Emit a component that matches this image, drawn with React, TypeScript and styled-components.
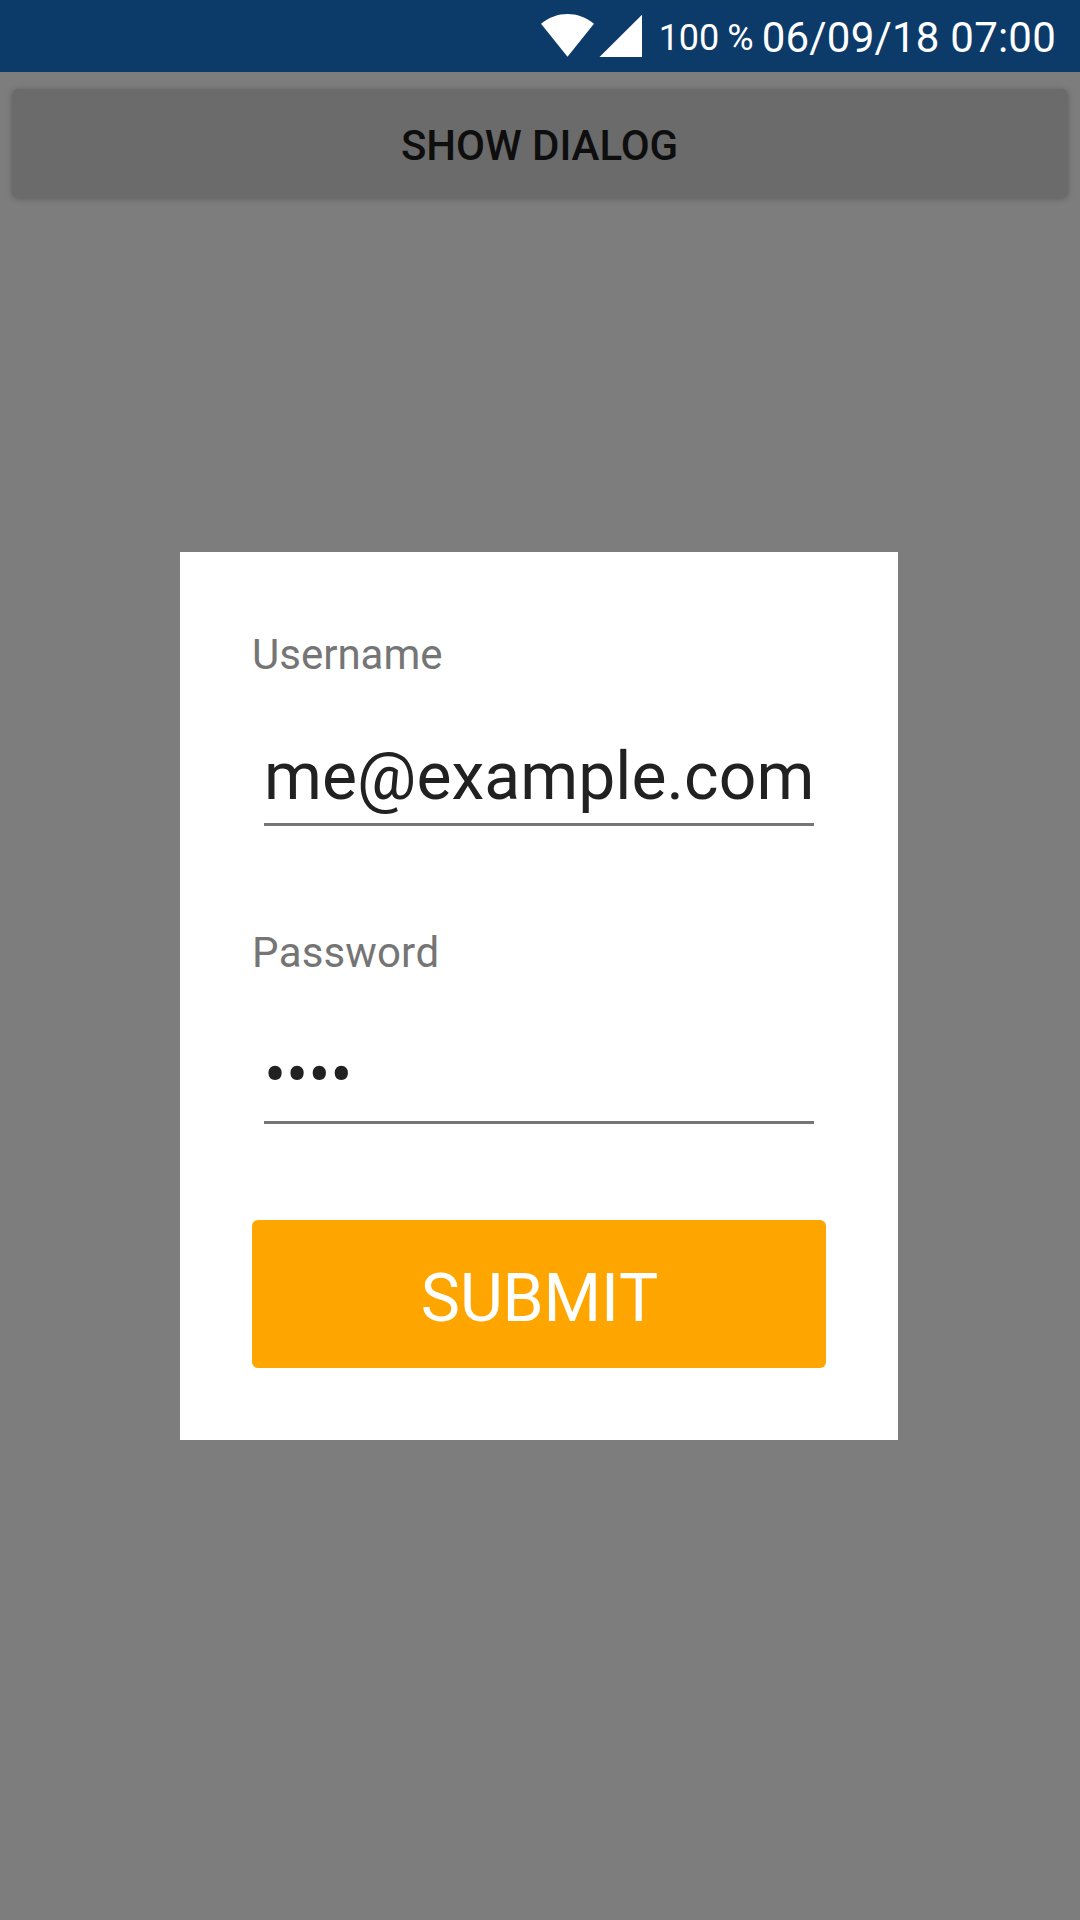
import React from "react";
import styled, { createGlobalStyle } from "styled-components";

const GlobalStyle = createGlobalStyle`
  *, *::before, *::after { box-sizing: border-box; }
  body {
    margin: 0;
    background: #7d7d7d;
    font-family: Roboto, "Liberation Sans", sans-serif;
    font-kerning: none;
  }
`;

const Screen = styled.div`
  position: relative;
  display: flex;
  flex-direction: column;
  width: 1080px;
  height: 1920px;
  overflow: hidden;
  background: #7d7d7d;
`;

const StatusBar = styled.header`
  display: flex;
  align-items: flex-start;
  justify-content: flex-end;
  height: 72px;
  padding-right: 24px;
  background: #0c3a69;
  color: #fff;
  white-space: pre;
`;

const StatusIcons = styled.svg`
  display: block;
  width: 104px;
  height: 46px;
  margin: 13px 15px 0 0;
  fill: #fff;
`;

const Battery = styled.span`
  margin: 17px 8px 0 0;
  font-size: 36px;
  line-height: 43px;
  word-spacing: -1px;
`;

const Clock = styled.span`
  padding-top: 13px;
  font-size: 42px;
  line-height: 49px;
  letter-spacing: 0.22px;
`;

const Page = styled.main`
  display: flex;
  flex-direction: column;
  padding: 17px 12px;
`;

const ShowButton = styled.button`
  height: 109px;
  padding: 4px 1px 0 0;
  border: 0;
  border-radius: 6px;
  background: #6b6b6b;
  box-shadow: 0 1px 6px rgba(0, 0, 0, 0.24);
  color: #0e0e0e;
  font: 500 42px/50px Roboto, "Liberation Sans", sans-serif;
  letter-spacing: -0.08px;
`;

const Overlay = styled.div`
  position: absolute;
  inset: 72px 0 0;
  display: flex;
  align-items: center;
  justify-content: center;
  padding-right: 2px;
`;

const Dialog = styled.form`
  display: flex;
  flex-direction: column;
  gap: 102px;
  width: 718px;
  height: 888px;
  padding: 78px 72px 72px;
  background: #fff;
`;

const Field = styled.label`
  display: flex;
  flex-direction: column;
  flex-shrink: 0;
`;

const Label = styled.span<{ $tracking: number }>`
  color: #757575;
  font-size: 42px;
  line-height: 50px;
  letter-spacing: ${(p) => p.$tracking}px;
`;

const Value = styled.span<{ $masked: boolean }>`
  height: 89px;
  margin: 57px 12px 0;
  padding-top: ${(p) => (p.$masked ? 2 : 1)}px;
  border-bottom: 3px solid #757575;
  color: #212121;
  font-size: 66px;
  line-height: 78px;
  letter-spacing: ${(p) => (p.$masked ? -0.2 : 0.08)}px;
  white-space: nowrap;
`;

const SubmitButton = styled.button`
  flex-shrink: 0;
  height: 148px;
  margin-top: -6px;
  padding: 10px 0 0 1px;
  border: 0;
  border-radius: 6px;
  background: #ffa500;
  color: #fff;
  font: 400 66px/78px Roboto, "Liberation Sans", sans-serif;
  font-kerning: none;
  letter-spacing: -0.12px;
`;

const fields = [
  { label: "Username", value: "me@example.com", tracking: 0, masked: false },
  { label: "Password", value: "••••", tracking: 0.15, masked: true },
];

export default function App() {
  return (
    <Screen>
      <GlobalStyle />
      <StatusBar>
        <StatusIcons viewBox="540 13 104 46">
          <path d="M541 23.8C557 10.9 578 10.9 594 23.8L567.5 56.7Z" />
          <path d="M599.5 57L642 14.7V57Z" />
        </StatusIcons>
        <Battery>100 %</Battery>
        <Clock>06/09/18 07:00</Clock>
      </StatusBar>
      <Page>
        <ShowButton type="button">SHOW DIALOG</ShowButton>
      </Page>
      <Overlay>
        <Dialog onSubmit={(e) => e.preventDefault()}>
          {fields.map((f) => (
            <Field key={f.label}>
              <Label $tracking={f.tracking}>{f.label}</Label>
              <Value $masked={f.masked}>{f.value}</Value>
            </Field>
          ))}
          <SubmitButton type="submit">SUBMIT</SubmitButton>
        </Dialog>
      </Overlay>
    </Screen>
  );
}
